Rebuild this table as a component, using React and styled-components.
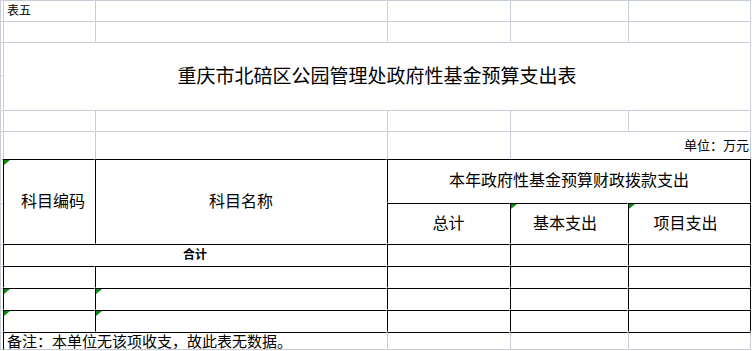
import React from "react";
import { styled, createGlobalStyle } from "styled-components";

const G = "#c6cdd9";
const B = "#000";

function App() {
	return (
		<>
			<GlobalStyle />
			<Sheet>
				{/* 第一、二行 */}
				<Cell $col={1} $row={1} />
				<Cell $col={2} $row={1} $justify='flex-start' $pl={3}>
					<Text $size={12}>表五</Text>
				</Cell>
				<Cell $col={3} $row={1} />
				<Cell $col={4} $row={1} />
				<Cell $col={5} $row={1} />
				<Cell $col={6} $row={1} $r={G} />
				<Cell $col={1} $row={2} />
				<Cell $col={2} $row={2} />
				<Cell $col={3} $row={2} />
				<Cell $col={4} $row={2} />
				<Cell $col={5} $row={2} />
				<Cell $col={6} $row={2} $r={G} />

				{/* 标题 */}
				<Cell $col={1} $row={3} />
				<Cell $col={1} $row={4} />
				<Cell $col={2} $cs={5} $row={3} $rs={2} $r={G}>
					<Text $size={19}>重庆市北碚区公园管理处政府性基金预算支出表</Text>
				</Cell>

				<Cell $col={1} $row={5} />
				<Cell $col={2} $row={5} />
				<Cell $col={3} $row={5} />
				<Cell $col={4} $row={5} />
				<Cell $col={5} $row={5} />
				<Cell $col={6} $row={5} $r={G} />

				<Cell $col={1} $row={6} />
				<Cell $col={2} $row={6} />
				<Cell $col={3} $row={6} />
				<Cell $col={4} $row={6} />
				<Cell $col={5} $cs={2} $row={6} $r={G} $justify='flex-end' $align='flex-end' $pr={1} $pb={6}>
					<Text $size={13}>单位：万元</Text>
				</Cell>

				{/* 表头 */}
				<Cell $col={1} $row={7} />
				<Cell $col={1} $row={8} />
				<Cell $col={2} $row={7} $rs={2} $t={B} $l={B} $mark $pl={8}>
					<Text $size={16}>科目编码</Text>
				</Cell>
				<Cell $col={3} $row={7} $rs={2} $t={B} $l={B}>
					<Text $size={16}>科目名称</Text>
				</Cell>
				<Cell $col={4} $cs={3} $row={7} $t={B} $l={B} $r={B}>
					<Text $size={16}>本年政府性基金预算财政拨款支出</Text>
				</Cell>
				<Cell $col={4} $row={8} $t={B} $l={B}>
					<Text $size={16}>总计</Text>
				</Cell>
				<Cell $col={5} $row={8} $t={B} $l={B} $mark $pr={8}>
					<Text $size={16}>基本支出</Text>
				</Cell>
				<Cell $col={6} $row={8} $t={B} $l={B} $r={B} $mark $pr={8}>
					<Text $size={16}>项目支出</Text>
				</Cell>

				{/* 合计 */}
				<Cell $col={1} $row={9} />
				<Cell $col={2} $cs={2} $row={9} $t={B} $l={B}>
					<Text $size={12} $bold>合计</Text>
				</Cell>
				<Cell $col={4} $row={9} $t={B} $l={B} />
				<Cell $col={5} $row={9} $t={B} $l={B} />
				<Cell $col={6} $row={9} $t={B} $l={B} $r={B} />

				{[10, 11, 12].map((row) => (
					<React.Fragment key={row}>
						<Cell $col={1} $row={row} />
						<Cell $col={2} $row={row} $t={B} $l={B} $mark={row > 10} />
						<Cell $col={3} $row={row} $t={B} $l={B} $mark={row > 10} />
						<Cell $col={4} $row={row} $t={B} $l={B} />
						<Cell $col={5} $row={row} $t={B} $l={B} />
						<Cell $col={6} $row={row} $t={B} $l={B} $r={B} />
					</React.Fragment>
				))}

				{/* 备注 */}
				<Cell $col={1} $row={13} $b={G} />
				<Cell $col={2} $cs={2} $row={13} $t={B} $l={B} $b={G} $justify='flex-start' $pl={3}>
					<Note>备注：本单位无该项收支，故此表无数据。</Note>
				</Cell>
				<Cell $col={4} $row={13} $t={B} $b={G} />
				<Cell $col={5} $row={13} $t={B} $b={G} />
				<Cell $col={6} $row={13} $t={B} $r={G} $b={G} />
			</Sheet>
		</>
	);
}

export default App;

const GlobalStyle = createGlobalStyle`
	html, body {
		margin: 0;
		padding: 0;
		background: #fff;
	}
	body {
		font-family: "Liberation Sans", "Noto Sans CJK SC", sans-serif;
		color: #000;
	}
`;

const Sheet = styled.div`
	display: grid;
	grid-template-columns: 3px 92px 292px 123px 118px 123px;
	grid-template-rows: 21px 21px 33px 35px 21px 28px 44px 41px 22px 22px 22px 22px 18px;
	width: 752px;
`;

const Cell = styled.div`
	position: relative;
	box-sizing: border-box;
	grid-column: ${(p) => p.$col} / span ${(p) => p.$cs || 1};
	grid-row: ${(p) => p.$row} / span ${(p) => p.$rs || 1};
	display: flex;
	align-items: ${(p) => p.$align || "center"};
	justify-content: ${(p) => p.$justify || "center"};
	padding: 0 ${(p) => p.$pr || 0}px ${(p) => p.$pb || 0}px ${(p) => p.$pl || 0}px;
	border-top: 1px solid ${(p) => p.$t || G};
	border-left: 1px solid ${(p) => p.$l || G};
	border-right: 1px solid ${(p) => p.$r || "transparent"};
	border-bottom: 1px solid ${(p) => p.$b || "transparent"};
	white-space: nowrap;
	background: #fff;

	&::before {
		content: "";
		display: ${(p) => (p.$mark ? "block" : "none")};
		position: absolute;
		left: 0;
		top: 0;
		width: 0;
		height: 0;
		border-top: 5px solid #098a0c;
		border-right: 6px solid transparent;
	}
`;

const Text = styled.span`
	font-size: ${(p) => p.$size}px;
	font-weight: ${(p) => (p.$bold ? 700 : 400)};
	line-height: 1;
`;

const Note = styled.span`
	font-size: 15px;
	line-height: 1;
	position: relative;
	z-index: 1;
`;
